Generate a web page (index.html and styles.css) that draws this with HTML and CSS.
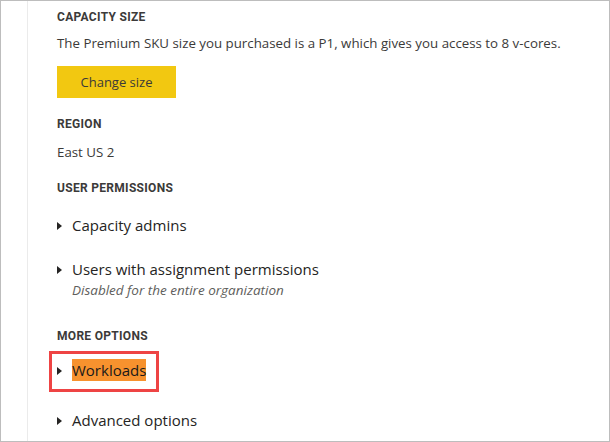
FILE: index.html
```html
<!DOCTYPE html>
<html lang="en">
<head>
<meta charset="utf-8">
<title>Capacity settings</title>
<link rel="stylesheet" href="styles.css">
</head>
<body>
<div class="frame">
  <div class="gutter"></div>
  <main class="content">
    <h3 class="label label-first">CAPACITY SIZE</h3>
    <p class="desc">The Premium SKU size you purchased is a P1, which gives you access to 8 v-cores.</p>
    <button class="btn" type="button">Change size</button>

    <h3 class="label label-region">REGION</h3>
    <p class="value">East US 2</p>

    <h3 class="label label-perm">USER PERMISSIONS</h3>
    <div class="item item-first"><span class="caret"></span><span class="item-text">Capacity admins</span></div>
    <div class="item item-second"><span class="caret"></span><span class="item-text">Users with assignment permissions</span></div>
    <p class="sub">Disabled for the entire organization</p>

    <h3 class="label label-more">MORE OPTIONS</h3>
    <div class="callout">
      <div class="item"><span class="caret"></span><span class="item-text highlight">Workloads</span></div>
    </div>
    <div class="item item-last"><span class="caret"></span><span class="item-text">Advanced options</span></div>
  </main>
</div>
</body>
</html>
```

FILE: styles.css
```css
* { box-sizing: border-box; }

html, body {
  margin: 0;
  padding: 0;
  background: #ffffff;
}

.frame {
  width: 610px;
  height: 442px;
  border: 1px solid #bdbdbd;
  display: flex;
  overflow: hidden;
  font-family: "Open Sans", "Noto Sans", sans-serif;
  color: #252423;
}

.gutter {
  width: 27px;
  flex: none;
  border-right: 1px solid #ebebeb;
}

.content {
  flex: 1;
  padding: 8px 0 0 29px;
  display: flex;
  flex-direction: column;
  align-items: flex-start;
}

.label {
  margin: 0;
  font-family: Roboto, "Liberation Sans", sans-serif;
  font-weight: 700;
  font-size: 12px;
  line-height: 16px;
  color: #3b3a39;
  letter-spacing: 0.3px;
}

.label-region { margin-top: 18px; }
.label-perm { margin-top: 19px; }
.label-more { margin-top: 29px; }

.desc {
  margin: 9px 0 0;
  font-size: 13.3px;
  line-height: 18px;
  color: #3b3a39;
}

.btn {
  margin-top: 14px;
  width: 119px;
  height: 32px;
  border: none;
  background: #f2c811;
  font-family: "Open Sans", "Noto Sans", sans-serif;
  font-size: 13px;
  color: #3b3a39;
  padding: 0;
}

.value {
  margin: 11px 0 0;
  font-size: 13.3px;
  line-height: 18px;
  color: #3b3a39;
}

.item {
  display: flex;
  align-items: center;
  font-size: 15px;
  line-height: 22px;
  color: #252423;
}

.item-first { margin-top: 18px; }
.item-second { margin-top: 22px; }
.item-last { margin-top: 17px; }

.caret {
  width: 0;
  height: 0;
  border-left: 5px solid #252423;
  border-top: 4.5px solid transparent;
  border-bottom: 4.5px solid transparent;
  margin-right: 10px;
  margin-top: 1px;
}

.sub {
  margin: 1px 0 0 15px;
  font-size: 13.5px;
  line-height: 18px;
  font-style: italic;
  color: #605e5c;
}

.callout {
  margin: 7px 0 0 -8px;
  border: 3px solid #ee4444;
  padding: 5px 10px 8px 5px;
}

.highlight {
  background: #f7922e;
  color: #1a1a1a;
}
```
